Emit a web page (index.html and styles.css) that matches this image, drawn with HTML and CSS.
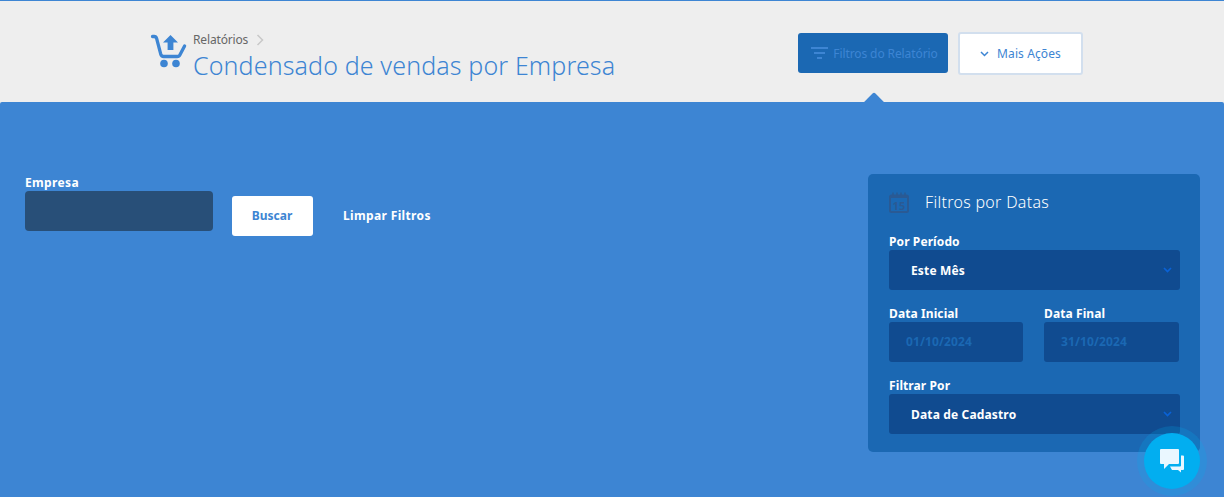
FILE: index.html
```html
<!DOCTYPE html>
<html lang="pt-br">
<head>
    <meta charset="UTF-8">
    <meta name="viewport" content="width=device-width, initial-scale=1.0">
    <title>Condensado de vendas por Empresa</title>
    <link rel="stylesheet" href="styles.css">
</head>
<body>

    <div class="topo">
        <div class="titulo">
            <svg class="icone-carrinho" width="38" height="36" viewBox="0 0 38 36">
                <path d="M2.500 3.500h1.700c1.300 0 2 .6 2.400 1.900l4 15.300c.5 1.700 1.400 2.800 3 2.800h13.500c1.500 0 2.400-.6 3-1.900l4.500-8.600" fill="none" stroke="#3d85d3" stroke-width="3.300" stroke-linecap="round" stroke-linejoin="round"/>
                <path d="M20.500 2l7.500 7.500h-4.600v7.500h-5.800V9.500H13z" fill="#3d85d3"/>
                <circle cx="14" cy="30.500" r="3.800" fill="#3d85d3"/>
                <circle cx="26" cy="30.500" r="3.800" fill="#3d85d3"/>
            </svg>
            <div>
                <div class="migalha">Relatórios
                    <svg width="8" height="12" viewBox="0 0 8 12"><path d="M1.500 1l5 5-5 5" fill="none" stroke="#c8c8c8" stroke-width="1.500"/></svg>
                </div>
                <h1>Condensado de vendas por Empresa</h1>
            </div>
        </div>
        <div class="acoes">
            <div class="btn-filtros">
                <svg width="17" height="12" viewBox="0 0 17 12"><path d="M0 1h17M3 6h11M6 11h5" fill="none" stroke="#3d85d3" stroke-width="2"/></svg>
                Filtros do Relatório
            </div>
            <div class="btn-mais">
                <svg width="9" height="6" viewBox="0 0 9 6"><path d="M1 1l3.500 3.500L8 1" fill="none" stroke="#3d85d3" stroke-width="1.500"/></svg>
                Mais Ações
            </div>
        </div>
    </div>

    <div class="painel">
        <div class="form-busca">
            <div class="campo-empresa">
                <label>Empresa</label>
                <div class="input-empresa"></div>
            </div>
            <div class="btn-buscar">Buscar</div>
            <div class="btn-limpar">Limpar Filtros</div>
        </div>

        <div class="datas">
            <div class="datas-titulo">
                <svg width="20" height="21" viewBox="0 0 20 21">
                    <rect x="1" y="3.500" width="18" height="16.500" rx="1.500" fill="none" stroke="#2a5a94" stroke-width="2"/>
                    <path d="M1 3h18v3H1z" fill="#2a5a94"/>
                    <path d="M4 0.500v3M8 0.500v3M12 0.500v3M16 0.500v3" stroke="#2a5a94" stroke-width="1.500"/>
                    <text x="10" y="17.500" text-anchor="middle" class="cal-dia">15</text>
                </svg>
                <span>Filtros por Datas</span>
            </div>

            <label>Por Período</label>
            <div class="select select-periodo">Este Mês
                <svg width="9" height="6" viewBox="0 0 9 6"><path d="M1 1l3.500 3.500L8 1" fill="none" stroke="#0a62d6" stroke-width="1.700"/></svg>
            </div>

            <div class="linha-datas">
                <div>
                    <label>Data Inicial</label>
                    <div class="input-data">01/10/2024</div>
                </div>
                <div>
                    <label>Data Final</label>
                    <div class="input-data">31/10/2024</div>
                </div>
            </div>

            <label>Filtrar Por</label>
            <div class="select">Data de Cadastro
                <svg width="9" height="6" viewBox="0 0 9 6"><path d="M1 1l3.500 3.500L8 1" fill="none" stroke="#0a62d6" stroke-width="1.700"/></svg>
            </div>
        </div>
    </div>

    <div class="chat">
        <svg width="24" height="24" viewBox="0 0 24 24">
            <path d="M1 0h17a1 1 0 0 1 1 1v13a1 1 0 0 1-1 1H9l-5 5v-5H1a1 1 0 0 1-1-1V1a1 1 0 0 1 1-1z" fill="#eaf7ff"/>
            <path d="M21 6.500h2a1 1 0 0 1 1 1V20a1 1 0 0 1-1 1h-2v2.500L18 21h-6l-2-3.500h10a1 1 0 0 0 1-1z" fill="#eaf7ff"/>
        </svg>
    </div>

</body>
</html>
```

FILE: styles.css
```css
body {
    font-family: "Noto Sans", "Open Sans", sans-serif;
    margin: 0;
    padding: 0;
    height: 497px;
    overflow: hidden;
    background-color: #eee;
}
label {
    display: block;
    font-size: 12px;
    line-height: 16px;
    font-weight: 700;
    letter-spacing: 0.1px;
    color: #fff;
}
.topo {
    display: flex;
    justify-content: space-between;
    height: 102px;
    box-sizing: border-box;
    padding: 31px 141px 0 150px;
    background-color: #eee;
    border-top: 1px solid #3d85d3;
}
.titulo {
    display: flex;
    gap: 5px;
    align-items: flex-start;
}
.icone-carrinho {
    margin-top: 1px;
    flex: none;
}
.migalha {
    display: flex;
    align-items: center;
    gap: 8px;
    margin-top: 1px;
    font-size: 12px;
    line-height: 14px;
    letter-spacing: -0.15px;
    color: #666;
}
h1 {
    margin: 1px 0 0;
    font-size: 25px;
    line-height: 34px;
    font-weight: 300;
    letter-spacing: 0.13px;
    color: #3d85d3;
    white-space: nowrap;
}
.acoes {
    display: flex;
    gap: 10px;
    align-items: flex-start;
}
.btn-filtros {
    display: flex;
    align-items: center;
    justify-content: center;
    gap: 5px;
    position: relative;
    width: 150px;
    height: 40px;
    box-sizing: border-box;
    margin-top: 1px;
    padding-left: 3px;
    background-color: #1b68b3;
    border-radius: 3px;
    color: #3d85d3;
    font-size: 12px;
    letter-spacing: -0.1px;
}
.btn-filtros::after {
    content: "";
    position: absolute;
    left: 69px;
    top: 62px;
    width: 14px;
    height: 14px;
    background-color: #3d85d3;
    transform: rotate(45deg);
    border-radius: 2px 0 0 0;
}
.btn-mais {
    display: flex;
    align-items: center;
    justify-content: center;
    gap: 8px;
    width: 125px;
    height: 43px;
    box-sizing: border-box;
    background-color: #fff;
    border: 2px solid #d2dfee;
    border-radius: 3px;
    color: #3d85d3;
    font-size: 12px;
    letter-spacing: 0.1px;
}
.painel {
    display: flex;
    justify-content: space-between;
    align-items: flex-start;
    height: 395px;
    box-sizing: border-box;
    padding: 72px 24px 0 25px;
    position: relative;
    background-color: #3d85d3;
    border-radius: 2px 2px 0 0;
}
.form-busca {
    display: flex;
    align-items: flex-start;
    margin-top: 1px;
}
.campo-empresa {
    width: 188px;
    margin-right: 19px;
}
.campo-empresa label {
    letter-spacing: 0.35px;
}
.input-empresa {
    height: 40px;
    background-color: #284f78;
    border-radius: 4px;
}
.btn-buscar {
    width: 81px;
    height: 40px;
    margin-top: 21px;
    padding-right: 1px;
    box-sizing: border-box;
    background-color: #fff;
    border-radius: 3px;
    text-align: center;
    line-height: 40px;
    font-size: 12px;
    font-weight: 700;
    color: #3d85d3;
}
.btn-limpar {
    margin: 21px 0 0 30px;
    line-height: 40px;
    font-size: 12px;
    font-weight: 700;
    letter-spacing: 0.35px;
    color: #fff;
}
.datas {
    width: 332px;
    height: 278px;
    box-sizing: border-box;
    padding: 17px 20px 0 21px;
    background-color: #1b68b3;
    border-radius: 5px;
}
.datas-titulo {
    display: flex;
    align-items: center;
    gap: 16px;
    height: 22px;
    margin-bottom: 21px;
    color: #fff;
    font-size: 16px;
    font-weight: 300;
    letter-spacing: 0.3px;
}
.cal-dia {
    font-family: "Noto Sans", sans-serif;
    font-size: 11px;
    font-weight: 700;
    fill: #2a5a94;
}
.select {
    display: flex;
    align-items: center;
    justify-content: space-between;
    height: 40px;
    padding: 0 8px 0 22px;
    background-color: #104b90;
    border-radius: 3px;
    color: #fff;
    font-size: 12px;
    font-weight: 700;
    letter-spacing: 0.15px;
}
.select-periodo {
    margin-bottom: 16px;
}
.linha-datas {
    display: flex;
    justify-content: space-between;
    margin: 0 1px 16px 0;
}
.linha-datas > div {
    width: 134px;
}
.linha-datas > div:last-child {
    width: 135px;
}
.input-data {
    height: 40px;
    padding-left: 17px;
    background-color: #104b90;
    border-radius: 3px;
    line-height: 40px;
    color: #1b68b3;
    font-size: 12px;
    font-weight: 700;
    letter-spacing: 0.1px;
}
.chat {
    display: flex;
    align-items: center;
    justify-content: center;
    position: absolute;
    left: 1144px;
    top: 433px;
    width: 56px;
    height: 56px;
    border-radius: 50%;
    background-color: #02aef0;
    box-shadow: 0 0 0 7px rgba(2, 174, 240, 0.2);
}
```
